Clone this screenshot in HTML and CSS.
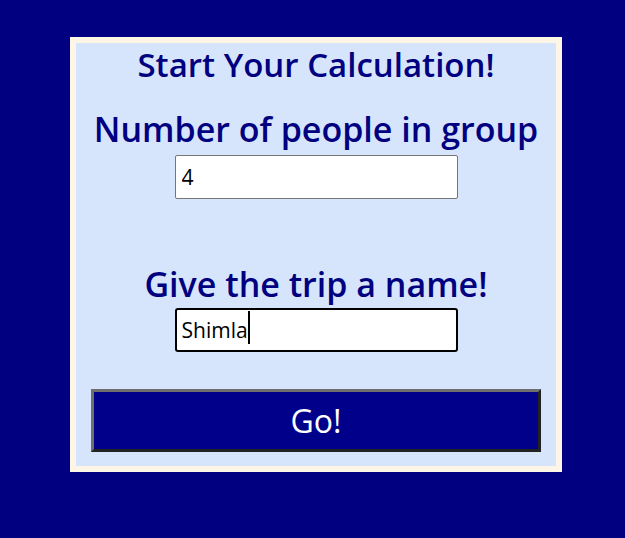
FILE: index.html
```html
<!DOCTYPE html>
<html>
<head>
<meta charset="utf-8">
<link rel="stylesheet" href="styles.css">
</head>
<body>
<div class="card">
  <h1 class="title">Start Your Calculation!</h1>
  <label class="label" for="people">Number of people in group</label>
  <input class="field field-people" id="people" type="text" value="4">
  <label class="label label-trip" for="trip">Give the trip a name!</label>
  <span class="field-wrap">
    <input class="field field-focus" id="trip" type="text" value="Shimla">
    <span class="caret-mirror" aria-hidden="true">Shimla</span>
  </span>
  <button class="go" type="button">Go!</button>
</div>
</body>
</html>
```
FILE: styles.css
```css
html, body {
  margin: 0;
  padding: 0;
  background: #000080;
  height: 100%;
}
body {
  padding: 37px 0 0 70px;
  box-sizing: border-box;
  font-family: "Open Sans", "Noto Sans", sans-serif;
}
.card {
  width: 450px;
  border: 6px solid #fdf5e6;
  background: #d6e5fb;
  padding: 0 15px 14px;
  box-sizing: content-box;
  display: flex;
  flex-direction: column;
  align-items: center;
}
.title {
  margin: 2px 0 0;
  font-size: 33px;
  line-height: 40px;
  font-weight: 600;
  color: #000080;
  white-space: nowrap;
}
.label {
  display: block;
  margin-top: 22px;
  font-size: 34px;
  line-height: 44px;
  font-weight: 600;
  color: #000080;
  white-space: nowrap;
}
.label-trip {
  margin-top: 63px;
}
.field {
  display: block;
  width: 283px;
  height: 44px;
  box-sizing: border-box;
  border: 1px solid #767676;
  border-radius: 2px;
  background: #fff;
  padding: 0 6px;
  font-family: "Open Sans", sans-serif;
  font-size: 21px;
  color: #000;
  margin: 0;
}
.field-people {
  margin-top: 4px;
}
.field-wrap {
  position: relative;
  display: block;
  margin-top: 2px;
}
.field-focus {
  border: 2px solid #000;
  border-radius: 3px;
  padding: 0 5px;
  outline: none;
}
.caret-mirror {
  position: absolute;
  left: 7px;
  top: 3px;
  height: 33px;
  font-family: "Open Sans", sans-serif;
  font-size: 21px;
  color: transparent;
  pointer-events: none;
  border-right: 2px solid #000;
  line-height: 33px;
}
.go {
  margin-top: 37px;
  width: 450px;
  height: 63px;
  box-sizing: border-box;
  background: #00008b;
  border: 3px solid;
  border-color: #6f6f6f #222 #222 #6f6f6f;
  color: #fff;
  font-family: "Open Sans", sans-serif;
  font-size: 32px;
  font-weight: 400;
  padding: 0;
}
```
